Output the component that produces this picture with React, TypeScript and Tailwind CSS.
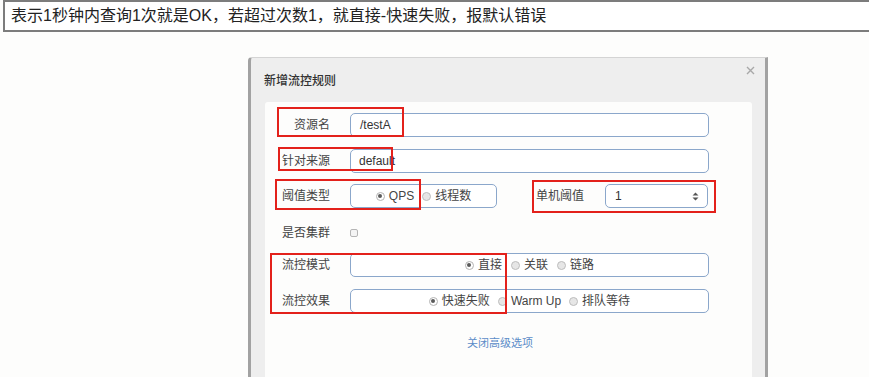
import React from 'react';

const Radio = ({ checked, label }: { checked?: boolean; label: string }) => (
  <span className="flex items-center gap-[4px]">
    {checked ? (
      <span className="w-[9px] h-[9px] rounded-full border border-[#b3b3b3] bg-white flex items-center justify-center">
        <span className="w-[4px] h-[4px] rounded-full bg-[#5a5a5a]" />
      </span>
    ) : (
      <span className="w-[9px] h-[9px] rounded-full border border-[#bdbdbd] bg-[#e6e6e6]" />
    )}
    <span>{label}</span>
  </span>
);

const Label = ({ children }: { children: React.ReactNode }) => (
  <div className="w-[65px] shrink-0 text-right text-[12px] text-[#444] leading-none">{children}</div>
);

const boxCls =
  'h-[24px] border border-[#8ba7cb] rounded-[5px] bg-white text-[12px] text-[#333] flex items-center';

const App = () => {
  return (
    <div className="relative w-[869px] h-[377px] overflow-hidden bg-[#fdfdfc] font-['Liberation_Sans','Noto_Sans_CJK_SC',sans-serif]">
      {/* note bar */}
      <div className="ml-[3px] h-[32px] border-2 border-r-0 border-[#7c7c7c] bg-white flex items-center pl-[6px] text-[16px] text-[#222]">
        表示1秒钟内查询1次就是OK，若超过次数1，就直接-快速失败，报默认错误
      </div>

      {/* dialog */}
      <div className="ml-[248px] mt-[25px] w-[520px] h-[330px] border-x-[3px] border-t border-x-[#a2a2a2] border-t-[#d4d4d4] rounded-tl-[4px] bg-[#eeeeee] flex flex-col">
        <div className="h-[44px] shrink-0 flex items-center justify-between pl-[13px] pr-[10px]">
          <span className="text-[12px] text-[#333] font-medium mt-[2px]">新增流控规则</span>
          <svg width="9" height="9" viewBox="0 0 9 9" className="self-start mt-[8px]">
            <path d="M1 1L8 8M8 1L1 8" stroke="#a8a8a8" strokeWidth="1.4" />
          </svg>
        </div>

        <div className="ml-[14px] w-[487px] flex-1 bg-[#fdfdfc] rounded-t-[3px] pt-[11px] flex flex-col">
          {/* 资源名 */}
          <div className="flex items-center">
            <Label>资源名</Label>
            <div className={`ml-[20px] w-[359px] pl-[9px] ${boxCls}`}>/testA</div>
          </div>

          {/* 针对来源 */}
          <div className="flex items-center mt-[12px]">
            <Label>针对来源</Label>
            <div className={`ml-[20px] w-[359px] pl-[8px] ${boxCls}`}>default</div>
          </div>

          {/* 阈值类型 / 单机阈值 */}
          <div className="flex items-center mt-[11px]">
            <Label>阈值类型</Label>
            <div className={`ml-[20px] w-[147px] justify-center gap-[8px] text-[#444] ${boxCls}`}>
              <Radio checked label="QPS" />
              <Radio label="线程数" />
            </div>
            <div className="ml-[39px] text-[12px] text-[#444]">单机阈值</div>
            <div className={`ml-[21px] w-[103px] pl-[9px] pr-[8px] justify-between ${boxCls}`}>
              <span>1</span>
              <svg width="7" height="9" viewBox="0 0 7 9">
                <path d="M3.5 0.5L6.5 3.5H0.5Z M3.5 8.5L0.5 5.5H6.5Z" fill="#555" />
              </svg>
            </div>
          </div>

          {/* 是否集群 */}
          <div className="flex items-center h-[24px] mt-[13px]">
            <Label>是否集群</Label>
            <span className="ml-[20px] w-[8px] h-[8px] border border-[#b5b5b5] rounded-[2px] bg-[#f4f4f4]" />
          </div>

          {/* 流控模式 */}
          <div className="flex items-center mt-[8px]">
            <Label>流控模式</Label>
            <div className={`ml-[20px] w-[359px] justify-center gap-[9px] text-[#444] ${boxCls}`}>
              <Radio checked label="直接" />
              <Radio label="关联" />
              <Radio label="链路" />
            </div>
          </div>

          {/* 流控效果 */}
          <div className="flex items-center mt-[12px]">
            <Label>流控效果</Label>
            <div className={`ml-[20px] w-[359px] justify-center gap-[8px] text-[#444] ${boxCls}`}>
              <Radio checked label="快速失败" />
              <Radio label="Warm Up" />
              <Radio label="排队等待" />
            </div>
          </div>

          <div className="mt-[22px] pr-[17px] flex justify-center text-[11px] text-[#5b8cc8]">关闭高级选项</div>
        </div>
      </div>

      {/* annotation boxes */}
      <div className="absolute left-[277px] top-[107px] w-[127px] h-[30px] border-2 border-[#e3211b]" />
      <div className="absolute left-[278px] top-[147px] w-[115px] h-[24px] border-2 border-[#e3211b]" />
      <div className="absolute left-[275px] top-[179px] w-[146px] h-[31px] border-2 border-[#e3211b]" />
      <div className="absolute left-[532px] top-[180px] w-[184px] h-[33px] border-2 border-[#e3211b]" />
      <div className="absolute left-[270px] top-[253px] w-[237px] h-[61px] border-2 border-[#e3211b]" />
    </div>
  );
};

export default App;
